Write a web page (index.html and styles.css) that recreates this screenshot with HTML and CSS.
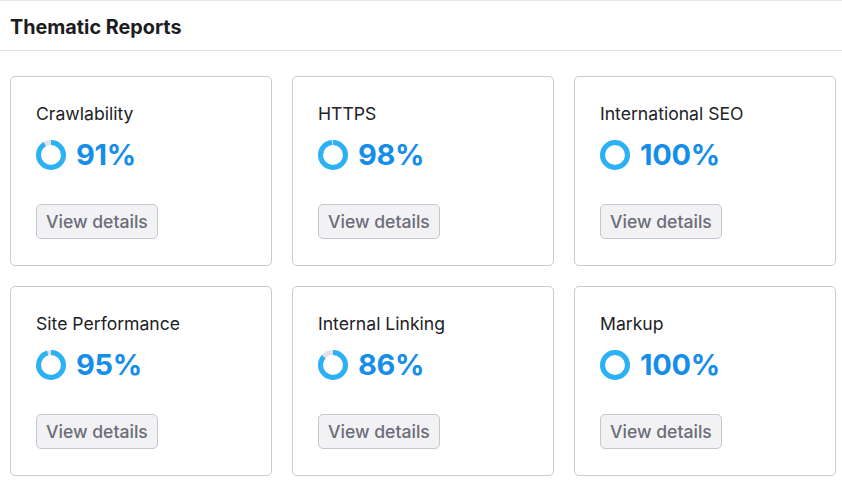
FILE: index.html
```html
<!DOCTYPE html>
<html lang="en">
<head>
<meta charset="utf-8">
<title>Thematic Reports</title>
<link rel="stylesheet" href="styles.css">
</head>
<body>
<section class="panel">
  <header class="panel-head"><h2 class="panel-title">Thematic Reports</h2></header>
  <div class="grid">
    <div class="card">
      <div class="card-title">Crawlability</div>
      <div class="score">
        <svg class="donut" viewBox="0 0 30 30"><circle class="track" cx="15" cy="15" r="12.5"/><circle class="fill" cx="15" cy="15" r="12.5" stroke-dasharray="71.47 78.54"/></svg>
        <span class="pct">91%</span>
      </div>
      <button class="btn">View details</button>
    </div>
    <div class="card">
      <div class="card-title">HTTPS</div>
      <div class="score">
        <svg class="donut" viewBox="0 0 30 30"><circle class="track" cx="15" cy="15" r="12.5"/><circle class="fill" cx="15" cy="15" r="12.5" stroke-dasharray="76.97 78.54"/></svg>
        <span class="pct">98%</span>
      </div>
      <button class="btn">View details</button>
    </div>
    <div class="card">
      <div class="card-title">International SEO</div>
      <div class="score">
        <svg class="donut" viewBox="0 0 30 30"><circle class="track" cx="15" cy="15" r="12.5"/><circle class="fill" cx="15" cy="15" r="12.5" stroke-dasharray="78.54 78.54"/></svg>
        <span class="pct">100%</span>
      </div>
      <button class="btn">View details</button>
    </div>
    <div class="card">
      <div class="card-title">Site Performance</div>
      <div class="score">
        <svg class="donut" viewBox="0 0 30 30"><circle class="track" cx="15" cy="15" r="12.5"/><circle class="fill" cx="15" cy="15" r="12.5" stroke-dasharray="74.61 78.54"/></svg>
        <span class="pct">95%</span>
      </div>
      <button class="btn">View details</button>
    </div>
    <div class="card">
      <div class="card-title">Internal Linking</div>
      <div class="score">
        <svg class="donut" viewBox="0 0 30 30"><circle class="track" cx="15" cy="15" r="12.5"/><circle class="fill" cx="15" cy="15" r="12.5" stroke-dasharray="67.54 78.54"/></svg>
        <span class="pct">86%</span>
      </div>
      <button class="btn">View details</button>
    </div>
    <div class="card">
      <div class="card-title">Markup</div>
      <div class="score">
        <svg class="donut" viewBox="0 0 30 30"><circle class="track" cx="15" cy="15" r="12.5"/><circle class="fill" cx="15" cy="15" r="12.5" stroke-dasharray="78.54 78.54"/></svg>
        <span class="pct">100%</span>
      </div>
      <button class="btn">View details</button>
    </div>
  </div>
</section>
</body>
</html>
```
FILE: styles.css
```css
* { box-sizing: border-box; }
html, body { margin: 0; padding: 0; background: #fff; }
body { font-family: Inter, "Noto Sans", sans-serif; color: #212127; }
.panel { border-top: 1px solid #e6e6ea; }
.panel-head {
  height: 50px;
  border-bottom: 1px solid #e2e2e6;
  display: flex;
  align-items: center;
  padding: 3px 10px 0;
}
.panel-title { margin: 0; font-size: 19.8px; font-weight: 700; color: #1c1c21; }
.grid {
  display: grid;
  grid-template-columns: repeat(3, 1fr);
  grid-auto-rows: 190px;
  gap: 20px 20px;
  padding: 25px 6px 0 10px;
}
.card {
  border: 1px solid #cbcbd0;
  border-radius: 5px;
  padding: 27px 25px 25px;
  display: flex;
  flex-direction: column;
  align-items: flex-start;
}
.card-title { font-size: 17.6px; line-height: 20px; color: #212127; }
.score { display: flex; align-items: center; gap: 10px; height: 34px; margin-top: 14px; }
.donut { width: 30px; height: 30px; transform: rotate(-90deg); display: block; }
.donut circle { fill: none; stroke-width: 5; }
.donut .track { stroke: #e1e1ea; }
.donut .fill { stroke: #2bb1f6; }
.pct { font-size: 29px; font-weight: 700; color: #168ee9; line-height: 34px; letter-spacing: -0.3px; }
.btn {
  margin-top: 32px;
  height: 35px;
  padding: 0 9px;
  font-family: inherit;
  font-size: 17.6px;
  font-weight: 500;
  color: #6b6d78;
  background: #f2f2f5;
  border: 1px solid #c6c7ce;
  border-radius: 5px;
}
```
